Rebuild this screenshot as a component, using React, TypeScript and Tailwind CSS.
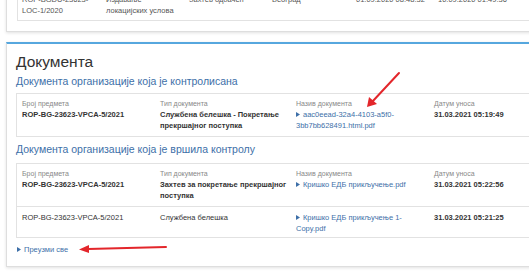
import React from "react";

const cols = "grid grid-cols-[138px_136px_138px_1fr]";

function Tri() {
  return (
    <svg width="4" height="5" viewBox="0 0 4 5" className="inline-block mr-[3px] align-[0px]">
      <path d="M0 0 L4 2.5 L0 5 Z" fill="#3d6fa8" />
    </svg>
  );
}

function Label({ children }: { children: React.ReactNode }) {
  return <div className="text-[7px] leading-[10px] text-[#888]">{children}</div>;
}

type Row = {
  num: string;
  type: React.ReactNode;
  link: React.ReactNode;
  date: string;
  head?: boolean;
  bold?: boolean;
};

function DocTable({ rows }: { rows: Row[] }) {
  return (
    <div className="border border-[#e2e2e2] bg-white">
      {rows.map((r, i) => (
        <div
          key={i}
          className={`${cols} px-[5px] pt-[5px] ${i > 0 ? "border-t border-[#e2e2e2] pb-[3px]" : "pb-[5px]"}`}
        >
          {[
            ["Број предмета", r.num, r.bold],
            ["Тип документа", r.type, r.bold],
            ["Назив документа", null, false],
            ["Датум уноса", r.date, true],
          ].map(([label, val, b], j) => (
            <div key={j}>
              {r.head && <Label>{label as string}</Label>}
              {j === 2 ? (
                <div className="text-[7.5px] leading-[11px] text-[#3d6fa8]">
                  <Tri />
                  {r.link}
                </div>
              ) : (
                <div
                  className={`text-[7.5px] leading-[11px] text-[#333] ${b ? "font-bold" : "font-normal"}`}
                >
                  {val as React.ReactNode}
                </div>
              )}
            </div>
          ))}
        </div>
      ))}
    </div>
  );
}

export default function App() {
  return (
    <div
      className="w-[529px] h-[272px] overflow-hidden bg-white relative"
      style={{ fontFamily: "'Liberation Sans', Arial, sans-serif" }}
    >
      <div className="w-[570px] pl-[6px]">
        {/* previous panel, only its bottom is visible */}
        <div className="-mt-[24px] border border-[#dedede] bg-white shadow-[0_1px_3px_rgba(0,0,0,0.12)] px-[10px] pt-[10px] pb-[10px]">
          <div className="border border-[#e2e2e2] pl-[4px] pt-[6px] pb-[4px] grid grid-cols-[84px_83px_83px_84px_82px_1fr] text-[7.5px] leading-[11px] text-[#555]">
            <div>
              ROP-BGDU-23623-
              <br />
              LOC-1/2020
            </div>
            <div>
              Издавање
              <br />
              локацијских услова
            </div>
            <div>Захтев одбачен</div>
            <div>Београд</div>
            <div>01.09.2020 08:48:32</div>
            <div>10.09.2020 01:49:36</div>
          </div>
        </div>

        {/* Документа */}
        <div className="mt-[10px] border border-[#dedede] border-t-2 border-t-[#56a7de] bg-white shadow-[0_1px_3px_rgba(0,0,0,0.12)] pl-[9px] pt-[8px] pb-[11px]">
          <h2 className="text-[15.5px] leading-[19px] text-[#333]">Документа</h2>
          <h3 className="mt-[3px] text-[10.5px] leading-[14px] text-[#3d6fa8]">
            Документа организације која је контролисана
          </h3>
          <div className="mt-[5px]">
            <DocTable
              rows={[
                {
                  head: true,
                  bold: true,
                  num: "ROP-BG-23623-VPCA-5/2021",
                  type: (
                    <>
                      Службена белешка - Покретање
                      <br />
                      прекршајног поступка
                    </>
                  ),
                  link: (
                    <>
                      aac0eead-32a4-4103-a5f0-
                      <br />
                      3bb7bb628491.html.pdf
                    </>
                  ),
                  date: "31.03.2021 05:19:49",
                },
              ]}
            />
          </div>
          <h3 className="mt-[5px] text-[10.5px] leading-[14px] text-[#3d6fa8]">
            Документа организације која је вршила контролу
          </h3>
          <div className="mt-[7px]">
            <DocTable
              rows={[
                {
                  head: true,
                  bold: true,
                  num: "ROP-BG-23623-VPCA-5/2021",
                  type: (
                    <>
                      Захтев за покретање прекршајног
                      <br />
                      поступка
                    </>
                  ),
                  link: <>Кришко ЕДБ прикључење.pdf</>,
                  date: "31.03.2021 05:22:56",
                },
                {
                  num: "ROP-BG-23623-VPCA-5/2021",
                  type: "Службена белешка",
                  link: (
                    <>
                      Кришко ЕДБ прикључење 1-
                      <br />
                      Copy.pdf
                    </>
                  ),
                  date: "31.03.2021 05:21:25",
                },
              ]}
            />
          </div>
          <div className="mt-[6px] pl-[1px] text-[7.5px] leading-[11px] text-[#3d6fa8]">
            <Tri />
            Преузми све
          </div>
        </div>
      </div>

      {/* red annotation arrows */}
      <svg className="absolute left-0 top-0 pointer-events-none" width="529" height="272">
        <g stroke="#e3262b" strokeWidth="2" strokeLinecap="round" fill="#e3262b">
          <line x1="399" y1="73" x2="372" y2="102" />
          <path d="M367 107 L369 97 L377 104 Z" strokeWidth="0" />
          <line x1="166" y1="247" x2="88" y2="249" />
          <path d="M79 249.5 L89 245 L89 253 Z" strokeWidth="0" />
        </g>
      </svg>
    </div>
  );
}
